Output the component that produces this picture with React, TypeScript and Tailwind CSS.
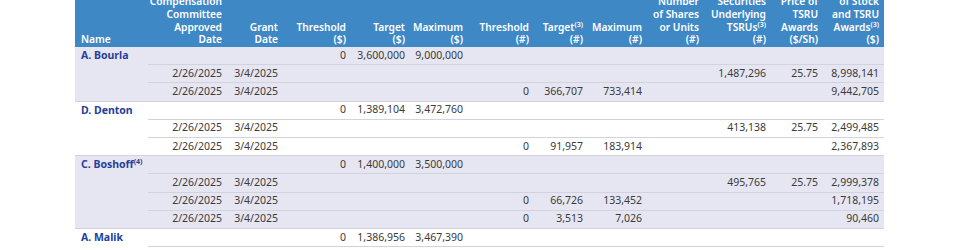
import React from 'react';

type Row = (string | null)[];

interface Group {
  name: string;
  note?: string;
  shaded: boolean;
  rows: Row[];
}

// column order: approved, grant, thr$, tgt$, max$, thr#, tgt#, max#, shares, tsrus, price, fairValue
const groups: Group[] = [
  {
    name: 'A. Bourla',
    shaded: true,
    rows: [
      [null, null, '0', '3,600,000', '9,000,000', null, null, null, null, null, null, null],
      ['2/26/2025', '3/4/2025', null, null, null, null, null, null, null, '1,487,296', '25.75', '8,998,141'],
      ['2/26/2025', '3/4/2025', null, null, null, '0', '366,707', '733,414', null, null, null, '9,442,705'],
    ],
  },
  {
    name: 'D. Denton',
    shaded: false,
    rows: [
      [null, null, '0', '1,389,104', '3,472,760', null, null, null, null, null, null, null],
      ['2/26/2025', '3/4/2025', null, null, null, null, null, null, null, '413,138', '25.75', '2,499,485'],
      ['2/26/2025', '3/4/2025', null, null, null, '0', '91,957', '183,914', null, null, null, '2,367,893'],
    ],
  },
  {
    name: 'C. Boshoff',
    note: '(4)',
    shaded: true,
    rows: [
      [null, null, '0', '1,400,000', '3,500,000', null, null, null, null, null, null, null],
      ['2/26/2025', '3/4/2025', null, null, null, null, null, null, null, '495,765', '25.75', '2,999,378'],
      ['2/26/2025', '3/4/2025', null, null, null, '0', '66,726', '133,452', null, null, null, '1,718,195'],
      ['2/26/2025', '3/4/2025', null, null, null, '0', '3,513', '7,026', null, null, null, '90,460'],
    ],
  },
  {
    name: 'A. Malik',
    shaded: false,
    rows: [
      [null, null, '0', '1,386,956', '3,467,390', null, null, null, null, null, null, null],
      ['2/26/2025', '3/4/2025', null, null, null, null, null, null, null, '481,600', '25.75', '2,913,680'],
    ],
  },
];

const headers: React.ReactNode[][] = [
  ['Compensation', 'Committee', 'Approved', 'Date'],
  ['Grant', 'Date'],
  ['Threshold', '($)'],
  ['Target', '($)'],
  ['Maximum', '($)'],
  ['Threshold', '(#)'],
  [<>Target<sup className="text-[7px]">(3)</sup></>, '(#)'],
  ['Maximum', '(#)'],
  ['Awards:', 'Number', 'of Shares', 'or Units', '(#)'],
  ['Number of', 'Securities', 'Underlying', <>TSRUs<sup className="text-[7px]">(3)</sup></>, '(#)'],
  ['Base', 'Price of', 'TSRU', 'Awards', '($/Sh)'],
  ['Fair Value', 'of Stock', 'and TSRU', <>Awards<sup className="text-[7px]">(3)</sup></>, '($)'],
];

const GRID = 'grid grid-cols-[73px_79px_56px_68px_59px_58px_66px_54px_59px_57px_67px_52px_61px]';

const App: React.FC = () => {
  return (
    <div className="h-[250px] overflow-hidden bg-white pl-[75px] text-[10.5px] text-[#3a3a3a]" style={{ fontFamily: '"Noto Sans", sans-serif' }}>
      <div className="w-[809px] -mt-[18px]">
        {/* header */}
        <div className={`${GRID} h-[65px] bg-[#3f88c6] font-semibold text-[10.2px] text-white leading-[12.7px]`}>
          <div className="flex items-end pl-[6px] pb-[1px]">Name</div>
          {headers.map((lines, i) => (
            <div key={i} className="flex flex-col justify-end items-end pr-[5px] pb-[1px] text-right whitespace-nowrap">
              {lines.map((l, j) => (
                <div key={j}>{l}</div>
              ))}
            </div>
          ))}
        </div>

        {/* body */}
        {groups.map((g) => (
          <div key={g.name} className={g.shaded ? 'bg-[#e6e6f2]' : 'bg-white'}>
            {g.rows.map((row, ri) => {
              const last = ri === g.rows.length - 1;
              return (
                <div key={ri} className={GRID}>
                  <div className={`h-[18.2px] flex items-center pl-[6px] font-bold text-[#23409a] whitespace-nowrap ${last ? 'border-b border-[#d3d3dd]' : ''}`}>
                    {ri === 0 && (
                      <>
                        {g.name}
                        {g.note && <sup className="text-[7px]">{g.note}</sup>}
                      </>
                    )}
                  </div>
                  {row.map((v, ci) => (
                    <div key={ci} className="h-[18.2px] flex items-center justify-end pr-[5px] border-b border-[#d3d3dd] whitespace-nowrap">
                      {v}
                    </div>
                  ))}
                </div>
              );
            })}
          </div>
        ))}
      </div>
    </div>
  );
};

export default App;
